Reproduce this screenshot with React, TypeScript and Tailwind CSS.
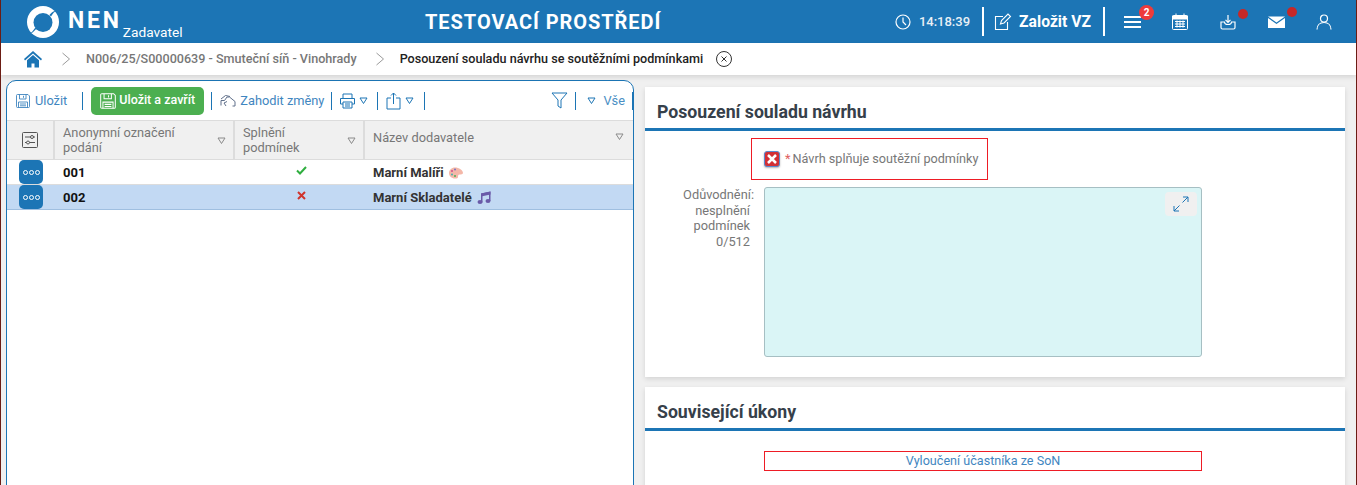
import React from "react";

const Tri = ({ c = "#8a8a8a", s = 9 }: { c?: string; s?: number }) => (
  <svg width={s} height={s} viewBox="0 0 9 9" fill="none" stroke={c} strokeWidth="1"><path d="M1 2h7L4.500 7.500z" /></svg>
);
const Sep = () => <div className="w-[1px] h-[18px] bg-[#1c75b5]" />;
const Save = ({ c = "#1c75b5", s = 16 }: { c?: string; s?: number }) => (
  <svg width={s} height={s} viewBox="0 0 16 16" fill="none" stroke={c} strokeWidth="0.900">
    <path d="M1.500 2.500a1 1 0 0 1 1-1H13l1.500 1.500v10.500a1 1 0 0 1-1 1h-11a1 1 0 0 1-1-1z" />
    <path d="M4.500 1.500v4.500h6.500v-4.500M8.500 2.800v2M3.500 14.500v-5.500h9v5.500M5 11h6M5 12.800h6" />
  </svg>
);
const Dots = () => (
  <div className="w-[24px] h-[24px] rounded-[5px] bg-[#1c75b5] flex items-center justify-center gap-[1px]">
    {[0, 1, 2].map((i) => <span key={i} className="w-[5px] h-[5px] rounded-full border-[1.500px] border-white" />)}
  </div>
);
const Chevron = () => (
  <svg width="10" height="14" viewBox="0 0 10 14" fill="none" stroke="#9a9a9a" strokeWidth="1"><path d="M1.500 1l7 6-7 6" /></svg>
);

export default function App() {
  return (
    <div className="w-[1357px] h-[485px] overflow-hidden bg-[#f0f0f0] border-x border-[#6b1d14] text-[#666] text-[12.800px] flex flex-col" style={{ fontFamily: "Roboto, sans-serif" }}>
      <header className="h-[43px] shrink-0 bg-[#1c75b5] text-white flex items-center relative">
        <svg width="32" height="32" viewBox="0 0 32 32" className="ml-[26px]">
          <circle cx="16" cy="16" r="16" fill="#fff" />
          <circle cx="16" cy="16.500" r="9.500" fill="#1c75b5" />
          <path d="M8 22C6 25 4.500 27 3.500 26.500C5 28.500 8 24 10 22z" fill="#1c75b5" />
          <path d="M24 10.500C26 7 28 5 29.500 5.500C27 3.500 24 7 22.500 9z" fill="#1c75b5" />
        </svg>
        <span className="ml-[9px] mt-[-3px] text-[23px] leading-none font-bold tracking-[2.800px]">NEN</span>
        <span className="ml-[1px] mt-[22px] text-[13.700px] leading-none">Zadavatel</span>
        <div className="absolute left-[424px] top-[11px] text-[20px] leading-[22px] font-bold tracking-[0.950px]">TESTOVACÍ PROSTŘEDÍ</div>
        <div className="ml-auto flex items-center h-full">
          <svg width="16" height="16" viewBox="0 0 16 16" fill="none" stroke="#fff" strokeWidth="1.200"><circle cx="8" cy="8" r="7" /><path d="M8 3.500V8l3 3" /></svg>
          <span className="ml-[8px] text-[13px] text-[#e8f0f6] font-medium">14:18:39</span>
          <div className="ml-[12px] w-[2px] h-[29px] bg-white" />
          <svg width="18" height="18" viewBox="0 0 18 18" fill="none" stroke="#fff" strokeWidth="1.100" className="ml-[10px]"><path d="M9 3.500H1.500v13h12V9" /><path d="M6.500 11l1-3.500L14 1l2.500 2.500L10 10z" /></svg>
          <span className="ml-[7px] text-[15.700px] font-bold">Založit VZ</span>
          <div className="ml-[12px] w-[2px] h-[29px] bg-white" />
          <div className="relative ml-[19px] w-[17px]">
            <div className="flex flex-col gap-[3px]">
              {[0, 1, 2].map((i) => <div key={i} className="h-[2px] bg-white" />)}
            </div>
            <span className="absolute left-[15px] top-[-11px] w-[15px] h-[15px] rounded-full bg-[#ee3b3b] text-[10px] font-bold leading-[15px] text-center">2</span>
          </div>
          <svg width="16" height="17" viewBox="0 0 16 17" fill="none" stroke="#fff" className="ml-[31px]"><rect x="0.500" y="2.500" width="15" height="14" rx="1" /><path d="M0.500 3h15v3h-15z" fill="#fff" /><path d="M4 0.500v3M12 0.500v3M3 8.500h10M3 11h10M3 13.500h10M5 7.500v7M8 7.500v7M11 7.500v7" /></svg>
          <div className="relative ml-[32px]">
            <svg width="16" height="16" viewBox="0 0 16 16" fill="none" stroke="#fff" strokeWidth="1.200"><path d="M8 1v7M5.500 5.800 8 8.300l2.500-2.500M4.500 8H1v5.500a1.500 1.500 0 0 0 1.500 1.500h11a1.500 1.500 0 0 0 1.500-1.500V8h-3.500c0 1.500-1 2.500-3.500 2.500S4.500 9.500 4.500 8z" /></svg>
            <span className="absolute left-[18px] top-[-5px] w-[10px] h-[10px] rounded-full bg-[#c62828]" />
          </div>
          <div className="relative ml-[32px]">
            <svg width="17" height="12" viewBox="0 0 17 12" fill="#fff"><path d="M0 0.500h17L8.500 6.500zM0 2l8.500 6L17 2v10H0z" /></svg>
            <span className="absolute left-[19px] top-[-9px] w-[10px] h-[10px] rounded-full bg-[#c62828]" />
          </div>
          <svg width="16" height="16" viewBox="0 0 16 16" fill="none" stroke="#fff" strokeWidth="1.200" className="ml-[31px] mr-[24px]"><circle cx="8" cy="4.500" r="3.500" /><path d="M1 15.500C1 11 4 8.500 8 8.500s7 2.500 7 7" /></svg>
        </div>
      </header>

      <nav className="h-[32px] shrink-0 bg-white flex items-center shadow-[0_2px_5px_rgba(0,0,0,0.12)] relative z-10 text-[12.600px]">
        <svg width="18" height="17" viewBox="0 0 18 17" fill="#1c75b5" className="ml-[23px]"><path d="M9 0 0 8l1 1.500 8-7 8 7L18 8zM9 4l-6 5.300V16.500h4.500v-4h3v4H15V9.300z" /></svg>
        <span className="ml-[19px] flex"><Chevron /></span>
        <span className="ml-[15px] font-medium text-[#777]">N006/25/S00000639 - Smuteční síň - Vinohrady</span>
        <span className="ml-[18px] flex"><Chevron /></span>
        <span className="ml-[15px] font-medium text-[#222]">Posouzení souladu návrhu se soutěžními podmínkami</span>
        <svg width="16" height="16" viewBox="0 0 16 16" fill="none" stroke="#333" strokeWidth="1" className="ml-[13px]"><circle cx="8" cy="8" r="7.500" /><path d="M5.500 5.500l5 5M10.500 5.500l-5 5" /></svg>
      </nav>

      <main className="flex-1 flex min-h-0 items-start">
        <section className="ml-[5px] mt-[5px] w-[628px] h-[420px] shrink-0 bg-white border border-[#1c75b5] rounded-t-[10px]">
          <div className="h-[39px] flex items-center text-[#1c75b5]">
            <span className="ml-[8px] flex"><Save c="#3f86c0" /></span>
            <span className="ml-[4px] text-[#3f86c0]">Uložit</span>
            <div className="ml-[15px]"><Sep /></div>
            <div className="ml-[8px] w-[113px] h-[28px] rounded-[5px] bg-[#4caf50] text-white font-medium flex items-center pl-[8px] gap-[2px]"><Save c="#fff" s={18} /><span className="text-[12.500px]">Uložit a zavřít</span></div>
            <div className="ml-[7px]"><Sep /></div>
            <svg width="16" height="13" viewBox="0 0 16 13" fill="none" stroke="#5f6f8a" strokeWidth="1" className="ml-[8px]"><path d="M1 11.500V6.500H4.500L7 3h2.500L15 7.500v4.500h-2.500M1 5 5.500 1.500 10 2.500M6 12l-2-3 3-1.500" /></svg>
            <span className="ml-[4px] text-[#3f86c0]">Zahodit změny</span>
            <div className="ml-[7px]"><Sep /></div>
            <svg width="17" height="16" viewBox="0 0 17 16" fill="none" stroke="#1c75b5" strokeWidth="1" className="ml-[7px]"><path d="M4 5V1h9v4M4 11H1.500V5.500h14V11H13M4 9h9v6H4zM6 11h5M6 13h5" /></svg>
            <span className="ml-[3px] flex"><Tri c="#1c75b5" /></span>
            <div className="ml-[9px]"><Sep /></div>
            <svg width="15" height="18" viewBox="0 0 15 18" fill="none" stroke="#1c75b5" strokeWidth="1" className="ml-[8px]"><path d="M5 6H1v11h13V6h-4M7.500 12V1M5 3.500 7.500 1 10 3.500" /></svg>
            <span className="ml-[4px] flex"><Tri c="#1c75b5" /></span>
            <div className="ml-[10px]"><Sep /></div>
            <svg width="17" height="17" viewBox="0 0 17 17" fill="none" stroke="#1c75b5" strokeWidth="1" className="ml-auto"><path d="M1 1h15l-6 7v8l-3-2V8z" /></svg>
            <div className="ml-[7px]"><Sep /></div>
            <span className="ml-[11px] flex"><Tri c="#1c75b5" /></span>
            <span className="ml-[7px] mr-[7px] text-[#4a8fc4]">Vše</span>
            <Sep />
          </div>
          <div className="h-[40px] bg-[#f0f0f0] border-y border-[#dcdcdc] flex text-[#777] leading-[15px]">
            <div className="w-[48px] border-r-2 border-[#dcdcdc] flex items-center justify-center">
              <svg width="16" height="16" viewBox="0 0 16 16" fill="none" stroke="#555" strokeWidth="1"><rect x="0.500" y="0.500" width="15" height="15" rx="1" /><path d="M3 5h10M3 10.500h10" /><circle cx="10" cy="5" r="1.500" fill="#f0f0f0" /><circle cx="6" cy="10.500" r="1.500" fill="#f0f0f0" /></svg>
            </div>
            <div className="w-[180px] border-r-2 border-[#dcdcdc] flex items-center pl-[8px] relative">
              <span className="w-[150px]">Anonymní označení podání</span>
              <span className="absolute right-[7px] top-[15px] flex"><Tri /></span>
            </div>
            <div className="w-[130px] border-r-2 border-[#dcdcdc] flex items-center pl-[8px] relative">
              <span className="w-[70px]">Splnění podmínek</span>
              <span className="absolute right-[7px] top-[15px] flex"><Tri /></span>
            </div>
            <div className="flex-1 pl-[8px] pt-[9px] relative">
              Název dodavatele
              <span className="absolute right-[9px] top-[11px] flex"><Tri /></span>
            </div>
          </div>
          <div className="h-[25px] border-b border-[#dcdcdc] flex items-center text-[#111] text-[13px] font-bold">
            <div className="w-[50px] pl-[12px] shrink-0"><Dots /></div>
            <div className="w-[180px] pl-[6px] shrink-0 pt-[1px]">001</div>
            <div className="w-[128px] shrink-0 flex justify-center mt-[-3px]">
              <svg width="11" height="9" viewBox="0 0 11 9" fill="none" stroke="#2fae3f" strokeWidth="2"><path d="M1 4.500 4 7.500 10 1" /></svg>
            </div>
            <div className="pl-[8px] pt-[1px] text-[#333] flex items-center gap-[5px]">Marní Malíři
              <svg width="14" height="12" viewBox="0 0 14 12"><path d="M6 0.500C10 0.500 14 3 14 6c0 1.500-2 1.500-3.500 1.500S9 9 9 10s-1 1.500-3 1.500C2.500 11.500 0 9 0 6s2.500-5.500 6-5.500z" fill="#f4b7a8" /><circle cx="3" cy="4" r="1" fill="#d0508a" /><circle cx="6" cy="2.500" r="1" fill="#7a6fc0" /><circle cx="3" cy="7.500" r="1" fill="#46b0b0" /><circle cx="6" cy="9" r="1" fill="#4caf50" /></svg>
            </div>
          </div>
          <div className="h-[25px] bg-[#c2d9f3] border-b border-[#9fbfe0] flex items-center text-[#111] text-[13px] font-bold">
            <div className="w-[50px] pl-[12px] shrink-0"><Dots /></div>
            <div className="w-[180px] pl-[6px] shrink-0 pt-[1px]">002</div>
            <div className="w-[128px] shrink-0 flex justify-center mt-[-3px]">
              <svg width="9" height="9" viewBox="0 0 9 9" fill="none" stroke="#d0342c" strokeWidth="2"><path d="M1 1l7 7M8 1 1 8" /></svg>
            </div>
            <div className="pl-[8px] pt-[1px] text-[#333] flex items-center gap-[5px]">Marní Skladatelé
              <svg width="14" height="13" viewBox="0 0 14 13" fill="#6a5aa8"><path d="M4 2.500 13.500 0.500v9.500h-1.500V3L5.500 4.300V11.500H4z" /><path d="M4 2.500 13.500 0.500v3L4 5.500z" /><ellipse cx="3" cy="11" rx="2.500" ry="2" /><ellipse cx="11" cy="10" rx="2.500" ry="2" /></svg>
            </div>
          </div>
        </section>

        <div className="ml-[11px] w-[700px] shrink-0 pt-[12px] flex flex-col gap-[10px]">
          <section className="h-[290px] bg-white shadow-[0_2px_5px_rgba(0,0,0,0.12)]">
            <h2 className="h-[44px] border-b-[3px] border-[#1c75b5] pl-[12px] pt-[13px] text-[17.700px] leading-[24px] font-bold text-[#36404a]">Posouzení souladu návrhu</h2>
            <div className="flex">
              <div className="ml-[106px] mt-[7px] w-[237px] h-[42px] border border-[#ee1c25] flex items-center pl-[12px] whitespace-nowrap">
                <div className="w-[16px] h-[16px] rounded-[3px] bg-[#d22f35] border border-[#5a8ad0] flex items-center justify-center shadow-[0_1px_2px_rgba(0,0,0,0.3)]">
                  <svg width="10" height="10" viewBox="0 0 10 10" stroke="#fff" strokeWidth="2.500"><path d="M1 1l8 8M9 1 1 9" /></svg>
                </div>
                <span className="ml-[5px] text-[#e06060]">*</span>
                <span className="ml-[2px] text-[#777] text-[12.650px]">Návrh splňuje soutěžní podmínky</span>
              </div>
            </div>
            <div className="flex mt-[7px]">
              <div className="w-[109px] text-right text-[#777] leading-[15.500px]">
                <div>Odůvodnění:</div>
                <div className="pr-[4px]">nesplnění</div>
                <div className="pr-[4px]">podmínek</div>
                <div className="pr-[4px]">0/512</div>
              </div>
              <div className="ml-[10px] w-[438px] h-[170px] bg-[#daf5f6] border border-[#a6bfc3] rounded-[3px] relative">
                <div className="absolute right-[4px] top-[4px] w-[32px] h-[24px] rounded-[4px] bg-[#f0f0f0] flex items-center justify-center">
                  <svg width="16" height="16" viewBox="0 0 16 16" fill="none" stroke="#1c75b5" strokeWidth="1"><path d="M1 15 6.500 9.500M9.500 6.500 15 1M1 10v5h5M10 1h5v5" /></svg>
                </div>
              </div>
            </div>
          </section>
          <section className="h-[120px] bg-white shadow-[0_2px_5px_rgba(0,0,0,0.12)]">
            <h2 className="h-[44px] border-b-[3px] border-[#1c75b5] pl-[12px] pt-[13px] text-[17.700px] leading-[24px] font-bold text-[#36404a]">Související úkony</h2>
            <div className="ml-[119px] mt-[20px] w-[438px] h-[20px] border border-[#ee1c25] text-center text-[12.600px] leading-[18px] text-[#3f86c0]">Vyloučení účastníka ze SoN</div>
          </section>
        </div>
      </main>
    </div>
  );
}
